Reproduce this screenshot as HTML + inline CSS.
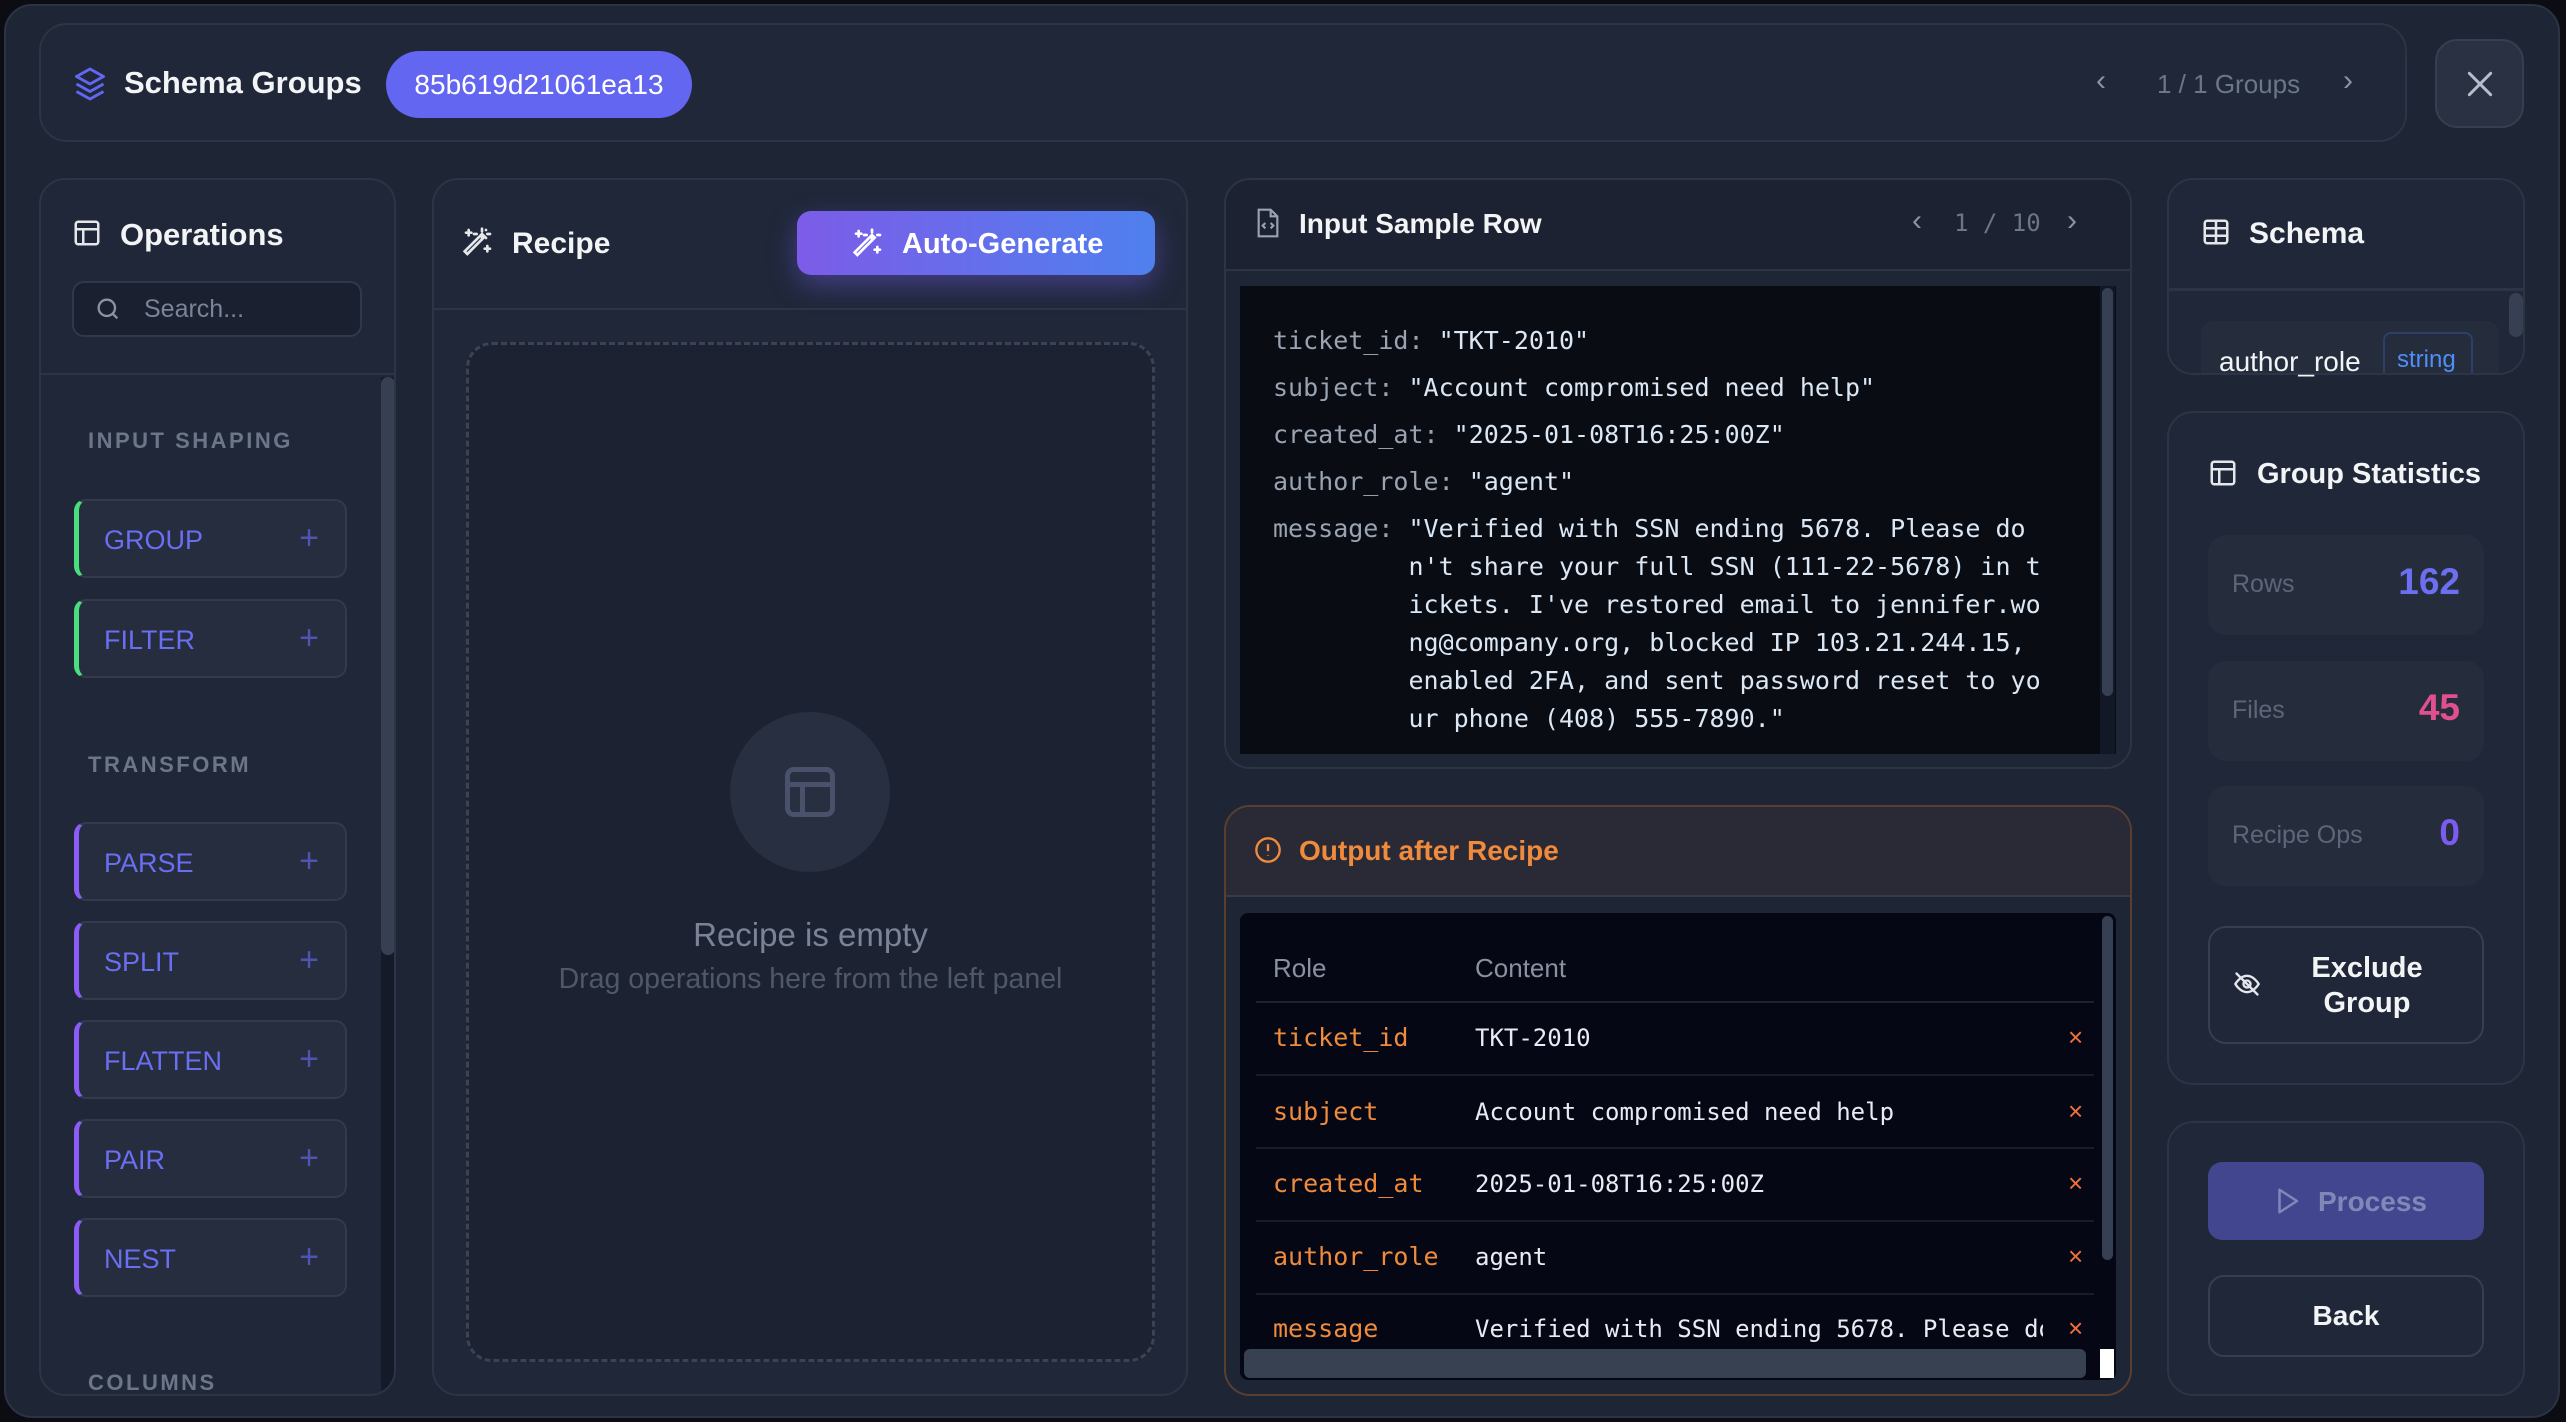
<!DOCTYPE html>
<html><head><meta charset="utf-8"><style>
*{box-sizing:border-box;margin:0;padding:0}
body{width:2566px;height:1422px;background:#0b0d12;font-family:"Liberation Sans",sans-serif;position:relative;overflow:hidden;color:#fff}
.a{position:absolute}
.modal{left:4px;top:4px;width:2556px;height:1414px;background:#1e2535;border:2px solid #2b3344;border-radius:28px}
.card{background:#1f2738;border:2px solid #2c3445;border-radius:28px}
.mono{font-family:"DejaVu Sans Mono","Liberation Mono",monospace}
.sec{color:#6b7689;font-weight:700;font-size:22px;letter-spacing:2.5px}
.op{left:74px;width:273px;height:79px;background:#252d3e;border:2px solid #323a4b;border-radius:12px;border-left:5px solid #8b5cf6}
.op span{position:absolute;left:25px;top:24px;font-size:27px;color:#6a6ef0}
.op i{position:absolute;right:26px;top:18px;font-style:normal;font-size:34px;color:#4f54b0;font-weight:300}
.stat{left:2208px;width:276px;height:100px;background:#252d3d;border-radius:18px}
.stat .l{position:absolute;left:24px;top:35px;font-size:25px;color:#5d6678}
.stat .v{position:absolute;right:24px;top:26px;font-size:37px;font-weight:700}
.kv{color:#9aa3b2}.vv{color:#dbe7f5}
.row{left:1256px;width:838px;height:2px;background:#161c2a}
.rl{left:1273px;color:#f08a3c;font-size:25px}
.rc{left:1475px;color:#e8ecf2;font-size:24px}
.rx{left:2068px;color:#f0703c;font-size:26px}
</style></head><body>
<div class="a modal"></div>
<!-- header -->
<div class="a card" style="left:39px;top:23px;width:2368px;height:119px"></div>
<svg class="a" style="left:72px;top:66px" width="36" height="36" viewBox="0 0 24 24" fill="none" stroke="#6366f1" stroke-width="2" stroke-linejoin="round"><path d="M12 2 3 7l9 5 9-5-9-5z"/><path d="M3 12l9 5 9-5"/><path d="M3 17l9 5 9-5"/></svg>
<div class="a" style="left:124px;top:65px;font-size:31px;font-weight:600;color:#f3f4f6">Schema Groups</div>
<div class="a" style="left:386px;top:51px;width:306px;height:67px;background:#6366f1;border-radius:34px;text-align:center;line-height:67px;font-size:28px;color:#fff">85b619d21061ea13</div>
<div class="a" style="left:2096px;top:64px;font-size:30px;color:#8a93a6">‹</div>
<div class="a" style="left:2157px;top:69px;font-size:26px;color:#6b7689">1 / 1 Groups</div>
<div class="a" style="left:2343px;top:64px;font-size:30px;color:#8a93a6">›</div>
<div class="a" style="left:2435px;top:39px;width:89px;height:89px;background:#2a3142;border:2px solid #363e4f;border-radius:22px"></div>
<svg class="a" style="left:2464px;top:68px" width="32" height="32" viewBox="0 0 24 24" stroke="#b8bfcc" stroke-width="2.2" stroke-linecap="round"><path d="M4 4l16 16M20 4 4 20"/></svg>

<!-- operations -->
<div class="a card" style="left:39px;top:178px;width:357px;height:1218px;border-radius:26px;overflow:hidden">
 <div class="a" style="left:0;top:193px;width:357px;height:2px;background:#2c3445"></div>
 <div class="a" style="left:340px;top:197px;width:14px;height:1020px;background:#141a28"></div>
 <div class="a" style="left:340px;top:197px;width:14px;height:578px;background:#364052;border-radius:7px"></div>
</div>
<svg class="a" style="left:72px;top:218px" width="30" height="30" viewBox="0 0 24 24" fill="none" stroke="#e5e7eb" stroke-width="2"><rect x="3" y="3" width="18" height="18" rx="2"/><path d="M3 9h18M9 9v12"/></svg>
<div class="a" style="left:120px;top:217px;font-size:31px;font-weight:600;color:#f3f4f6">Operations</div>
<div class="a" style="left:72px;top:281px;width:290px;height:56px;background:#1a2030;border:2px solid #30384a;border-radius:12px"></div>
<svg class="a" style="left:94px;top:295px" width="28" height="28" viewBox="0 0 24 24" fill="none" stroke="#8a93a6" stroke-width="2"><circle cx="11" cy="11" r="7"/><path d="M20 20l-4-4"/></svg>
<div class="a" style="left:144px;top:295px;font-size:25px;color:#7a8496">Search...</div>
<div class="a sec" style="left:88px;top:428px">INPUT SHAPING</div>
<div class="a op" style="top:499px;border-left-color:#4ade80"><span>GROUP</span><i>+</i></div>
<div class="a op" style="top:599px;border-left-color:#4ade80"><span>FILTER</span><i>+</i></div>
<div class="a sec" style="left:88px;top:752px">TRANSFORM</div>
<div class="a op" style="top:822px"><span>PARSE</span><i>+</i></div>
<div class="a op" style="top:921px"><span>SPLIT</span><i>+</i></div>
<div class="a op" style="top:1020px"><span>FLATTEN</span><i>+</i></div>
<div class="a op" style="top:1119px"><span>PAIR</span><i>+</i></div>
<div class="a op" style="top:1218px"><span>NEST</span><i>+</i></div>
<div class="a sec" style="left:88px;top:1370px">COLUMNS</div>

<!-- recipe -->
<div class="a card" style="left:432px;top:178px;width:756px;height:1218px;border-radius:26px">
 <div class="a" style="left:0;top:128px;width:752px;height:2px;background:#2c3445"></div>
</div>
<svg class="a" style="left:462px;top:226px" width="32" height="32" viewBox="0 0 24 24" fill="none" stroke="#e5e7eb" stroke-width="2" stroke-linecap="round"><path d="M4 21 17 8l-2-2L2 19z"/><path d="M15 4V2M15 10V8M11 6H9M21 6h-2M18 3h0M18 9h0"/><path d="M5 3v4M3 5h4M19 15v4M17 17h4"/></svg>
<div class="a" style="left:512px;top:227px;font-size:30px;font-weight:600;color:#f3f4f6">Recipe</div>
<div class="a" style="left:797px;top:211px;width:358px;height:64px;border-radius:14px;background:linear-gradient(90deg,#7c5ce8,#4f80ee);box-shadow:0 10px 28px rgba(110,90,230,.45)"></div>
<svg class="a" style="left:852px;top:227px" width="32" height="32" viewBox="0 0 24 24" fill="none" stroke="#fff" stroke-width="2" stroke-linecap="round"><path d="M4 21 17 8l-2-2L2 19z"/><path d="M15 4V2M15 10V8M11 6H9M21 6h-2"/><path d="M5 3v4M3 5h4M19 15v4M17 17h4"/></svg>
<div class="a" style="left:902px;top:228px;font-size:29px;font-weight:600;color:#fff">Auto-Generate</div>
<div class="a" style="left:466px;top:342px;width:689px;height:1020px;border:3px dashed #3a4254;border-radius:26px;background:#1c2232"></div>
<div class="a" style="left:730px;top:712px;width:160px;height:160px;border-radius:50%;background:#272f40"></div>
<svg class="a" style="left:780px;top:762px" width="60" height="60" viewBox="0 0 24 24" fill="none" stroke="#49526a" stroke-width="2"><rect x="3" y="3" width="18" height="18" rx="2.5"/><path d="M3 9h18M9 9v12"/></svg>
<div class="a" style="left:466px;top:916px;width:689px;text-align:center;font-size:33px;color:#7a8496">Recipe is empty</div>
<div class="a" style="left:446px;top:963px;width:729px;text-align:center;font-size:28.5px;color:#4f5869">Drag operations here from the left panel</div>

<!-- input sample -->
<div class="a card" style="left:1224px;top:178px;width:908px;height:591px;border-radius:26px;overflow:hidden;background:#1e2535">
 <div class="a" style="left:0;top:0;width:908px;height:90px;background:#1c2231"></div>
 <div class="a" style="left:0;top:89px;width:908px;height:2px;background:#2c3445"></div>
</div>
<svg class="a" style="left:1254px;top:207px" width="28" height="32" viewBox="0 0 20 24" fill="none" stroke="#9aa3b2" stroke-width="1.6"><path d="M3 2h9l5 5v15H3z"/><path d="M12 2v5h5"/><path d="M8 12l-2 2 2 2M12 12l2 2-2 2"/></svg>
<div class="a" style="left:1299px;top:208px;font-size:28px;font-weight:600;color:#f3f4f6">Input Sample Row</div>
<div class="a" style="left:1912px;top:204px;font-size:30px;color:#8a93a6">‹</div>
<div class="a mono" style="left:1954px;top:209px;font-size:24px;color:#6b7689">1 / 10</div>
<div class="a" style="left:2067px;top:204px;font-size:30px;color:#8a93a6">›</div>
<div class="a" style="left:1240px;top:286px;width:876px;height:468px;background:#090c13"></div>
<div class="a" style="left:2100px;top:286px;width:15px;height:468px;background:#121826"></div>
<div class="a" style="left:2102px;top:288px;width:11px;height:408px;background:#364052;border-radius:6px"></div>
<div class="a mono" style="left:1273px;top:322px;font-size:25px;line-height:38px">
<div style="margin-bottom:9px"><span class="kv">ticket_id:</span> <span class="vv">"TKT-2010"</span></div>
<div style="margin-bottom:9px"><span class="kv">subject:</span> <span class="vv">"Account compromised need help"</span></div>
<div style="margin-bottom:9px"><span class="kv">created_at:</span> <span class="vv">"2025-01-08T16:25:00Z"</span></div>
<div style="margin-bottom:9px"><span class="kv">author_role:</span> <span class="vv">"agent"</span></div>
<div style="display:flex"><span class="kv">message:&nbsp;</span><span class="vv">"Verified with SSN ending 5678. Please do<br>n't share your full SSN (111-22-5678) in t<br>ickets. I've restored email to jennifer.wo<br>ng@company.org, blocked IP 103.21.244.15,<br>enabled 2FA, and sent password reset to yo<br>ur phone (408) 555-7890."</span></div>
</div>

<!-- output -->
<div class="a" style="left:1224px;top:805px;width:908px;height:591px;border:2px solid #5a3f31;border-radius:26px;overflow:hidden;background:#1e2535">
 <div class="a" style="left:0;top:0;width:908px;height:89px;background:#292a35"></div>
 <div class="a" style="left:0;top:88px;width:908px;height:2px;background:#3a3a45"></div>
</div>
<svg class="a" style="left:1254px;top:836px" width="28" height="28" viewBox="0 0 24 24" fill="none" stroke="#f08a3c" stroke-width="2"><circle cx="12" cy="12" r="10"/><path d="M12 7v6M12 16.5v.5"/></svg>
<div class="a" style="left:1299px;top:835px;font-size:28px;font-weight:600;color:#f08a3c">Output after Recipe</div>
<div class="a" style="left:1240px;top:913px;width:876px;height:467px;background:#050814;border-radius:8px"></div>
<div class="a" style="left:2102px;top:916px;width:11px;height:344px;background:#364052;border-radius:6px"></div>
<div class="a" style="left:1273px;top:953px;font-size:26px;color:#8891a0">Role</div>
<div class="a" style="left:1475px;top:953px;font-size:26px;color:#8891a0">Content</div>
<div class="a row" style="top:1001px;background:#1c2232"></div>
<div class="a mono rl" style="top:1023px">ticket_id</div><div class="a mono rc" style="top:1024px">TKT-2010</div><div class="a rx" style="top:1022px">×</div>
<div class="a row" style="top:1074px"></div>
<div class="a mono rl" style="top:1097px">subject</div><div class="a mono rc" style="top:1098px">Account compromised need help</div><div class="a rx" style="top:1096px">×</div>
<div class="a row" style="top:1147px"></div>
<div class="a mono rl" style="top:1169px">created_at</div><div class="a mono rc" style="top:1170px">2025-01-08T16:25:00Z</div><div class="a rx" style="top:1168px">×</div>
<div class="a row" style="top:1220px"></div>
<div class="a mono rl" style="top:1242px">author_role</div><div class="a mono rc" style="top:1243px">agent</div><div class="a rx" style="top:1241px">×</div>
<div class="a row" style="top:1293px"></div>
<div class="a mono rl" style="top:1314px">message</div><div class="a mono rc" style="top:1315px;width:568px;overflow:hidden;white-space:nowrap">Verified with SSN ending 5678. Please do</div><div class="a rx" style="top:1313px">×</div>
<div class="a" style="left:1244px;top:1349px;width:842px;height:29px;background:#374151;border-radius:6px"></div>
<div class="a" style="left:2100px;top:1349px;width:14px;height:29px;background:#fff"></div>

<!-- schema -->
<div class="a card" style="left:2167px;top:178px;width:358px;height:197px;border-radius:26px;overflow:hidden">
 <div class="a" style="left:0;top:108px;width:358px;height:3px;background:#2c3445"></div>
 <div class="a" style="left:32px;top:141px;width:298px;height:70px;background:#252d3d;border-radius:12px"></div>
 <div class="a" style="left:340px;top:113px;width:14px;height:44px;background:#364052;border-radius:7px"></div>
</div>
<svg class="a" style="left:2201px;top:217px" width="30" height="30" viewBox="0 0 24 24" fill="none" stroke="#e5e7eb" stroke-width="2"><rect x="3" y="3" width="18" height="18" rx="2"/><path d="M3 9h18M3 15h18M12 3v18"/></svg>
<div class="a" style="left:2249px;top:217px;font-size:30px;font-weight:600;color:#f3f4f6">Schema</div>
<div class="a" style="left:2219px;top:346px;font-size:28px;color:#f3f4f6">author_role</div>
<div class="a" style="left:2383px;top:332px;width:90px;height:41px;border:2px solid #2b3f6a;border-bottom:none;border-radius:8px 8px 0 0;color:#4f8ef7;font-size:24px;padding:12px 0 0 12px">string</div>

<!-- group stats -->
<div class="a card" style="left:2167px;top:411px;width:358px;height:674px;border-radius:26px"></div>
<svg class="a" style="left:2208px;top:458px" width="30" height="30" viewBox="0 0 24 24" fill="none" stroke="#e5e7eb" stroke-width="2"><rect x="3" y="3" width="18" height="18" rx="2"/><path d="M3 9h18M9 9v12"/></svg>
<div class="a" style="left:2257px;top:458px;font-size:29px;font-weight:600;color:#f3f4f6">Group Statistics</div>
<div class="a stat" style="top:535px"><span class="l">Rows</span><span class="v" style="color:#6b6ff0">162</span></div>
<div class="a stat" style="top:661px"><span class="l">Files</span><span class="v" style="color:#e0508f">45</span></div>
<div class="a stat" style="top:786px"><span class="l">Recipe Ops</span><span class="v" style="color:#7c5cf0">0</span></div>
<div class="a" style="left:2208px;top:926px;width:276px;height:118px;border:2px solid #363e4f;border-radius:18px"></div>
<svg class="a" style="left:2233px;top:970px" width="28" height="28" viewBox="0 0 24 24" fill="none" stroke="#e5e7eb" stroke-width="2" stroke-linecap="round"><path d="M2 12s4-7 10-7 10 7 10 7-4 7-10 7S2 12 2 12z"/><circle cx="12" cy="12" r="3"/><path d="M3 3l18 18"/></svg>
<div class="a" style="left:2280px;top:951px;width:174px;text-align:center;font-size:29px;font-weight:600;line-height:35px;color:#f3f4f6">Exclude<br>Group</div>

<!-- bottom actions -->
<div class="a card" style="left:2167px;top:1121px;width:358px;height:275px;border-radius:26px"></div>
<div class="a" style="left:2208px;top:1162px;width:276px;height:78px;background:#41468f;border-radius:14px"></div>
<svg class="a" style="left:2272px;top:1186px" width="30" height="30" viewBox="0 0 24 24" fill="none" stroke="#8088b8" stroke-width="2" stroke-linejoin="round"><path d="M6 3l14 9-14 9z"/></svg>
<div class="a" style="left:2318px;top:1186px;font-size:28px;font-weight:600;color:#8088b8">Process</div>
<div class="a" style="left:2208px;top:1275px;width:276px;height:82px;border:2px solid #363e4f;border-radius:16px;text-align:center;line-height:78px;font-size:28px;font-weight:600;color:#f3f4f6">Back</div>
</body></html>
